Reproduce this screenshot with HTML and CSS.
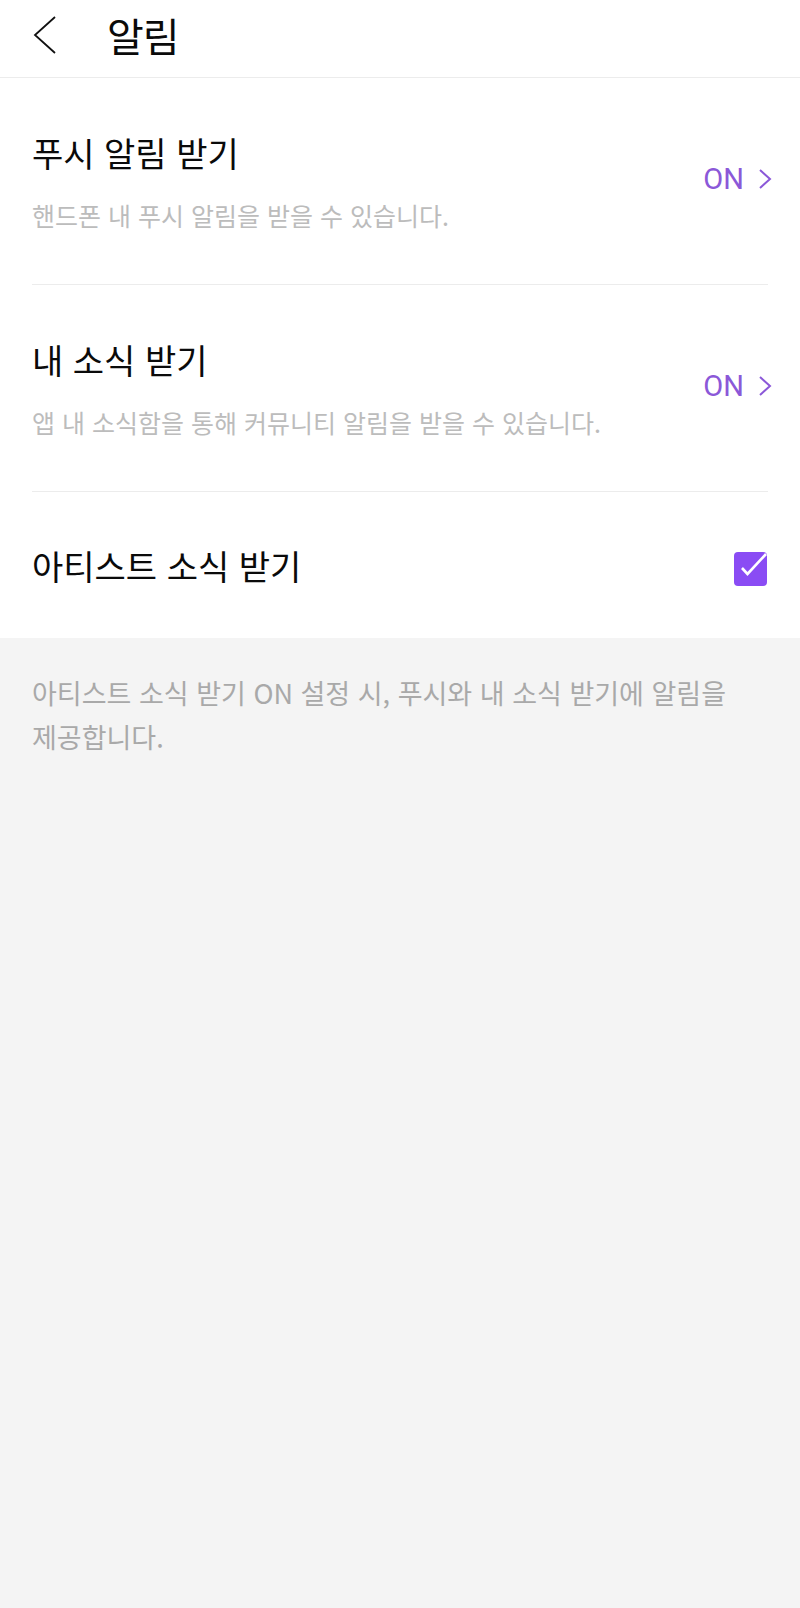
FILE: index.html
```html
<!DOCTYPE html>
<html lang="ko">
<head>
  <meta charset="UTF-8">
  <title>알림</title>
  <link rel="stylesheet" href="styles.css">
</head>

<body>
  <div class="top">
    <div class="header">
      <a class="back" href="#">
        <svg width="24" height="40" viewBox="0 0 24 40">
          <path d="M22 2 L2 20 L22 38" fill="none" stroke="#111" stroke-width="1.8"/>
        </svg>
      </a>
      <span class="title">알림</span>
    </div>

    <div class="list">
      <div class="row">
        <div class="text">
          <div class="row-title">푸시 알림 받기</div>
          <div class="row-desc">핸드폰 내 푸시 알림을 받을 수 있습니다.</div>
        </div>
        <div class="status">
          <span>ON</span>
          <svg width="14" height="22" viewBox="0 0 14 22">
            <path d="M2 2 L12 11 L2 20" fill="none" stroke="#8b58d8" stroke-width="2"/>
          </svg>
        </div>
      </div>

      <div class="row">
        <div class="text">
          <div class="row-title">내 소식 받기</div>
          <div class="row-desc">앱 내 소식함을 통해 커뮤니티 알림을 받을 수 있습니다.</div>
        </div>
        <div class="status">
          <span>ON</span>
          <svg width="14" height="22" viewBox="0 0 14 22">
            <path d="M2 2 L12 11 L2 20" fill="none" stroke="#8b58d8" stroke-width="2"/>
          </svg>
        </div>
      </div>

      <div class="row last">
        <div class="text">
          <div class="row-title">아티스트 소식 받기</div>
        </div>
        <svg class="check" width="34" height="34" viewBox="0 0 34 34">
          <rect x="0" y="0" width="33" height="34" rx="4" fill="#8a4cf4"/>
          <path d="M8 16 L13.5 22 L32 2" fill="none" stroke="#fff" stroke-width="2.6"/>
        </svg>
      </div>
    </div>
  </div>

  <p class="note">아티스트 소식 받기 ON 설정 시, 푸시와 내 소식 받기에 알림을 제공합니다.</p>
</body>
</html>
```

FILE: styles.css
```css
body {
  margin: 0;
  background-color: #f4f4f4;
  font-family: "Noto Sans CJK KR", sans-serif;
  color: #0a0a0a;
  word-break: keep-all;
}

.top {
  background-color: #fff;
}

.header {
  display: flex;
  align-items: center;
  height: 69px;
  padding: 0 0 8px 33px;
  border-bottom: 1px solid #ececec;
}

.back {
  display: flex;
}

.title {
  margin-left: 50px;
  font-size: 40px;
  line-height: 46px;
  letter-spacing: -1px;
}

.list {
  padding: 0 32px;
}

.row {
  display: flex;
  align-items: center;
  justify-content: space-between;
  padding: 55px 0 53px;
  border-bottom: 1px solid #ececec;
}

.row.last {
  padding: 54px 0 52px;
  border-bottom: none;
}

.row-title {
  font-size: 34px;
  line-height: 40px;
}

.row-desc {
  margin-top: 26px;
  font-size: 25px;
  line-height: 32px;
  color: #bcbcbc;
}

.status {
  display: flex;
  align-items: center;
  gap: 14px;
  margin-right: -4px;
  margin-bottom: 6px;
  color: #8b58d8;
  font-family: Roboto, sans-serif;
  font-size: 29px;
}

.check {
  margin-top: 6px;
}

.note {
  margin: 0;
  padding: 33px 32px;
  font-size: 27px;
  line-height: 44px;
  color: #a9a9a9;
}
```
